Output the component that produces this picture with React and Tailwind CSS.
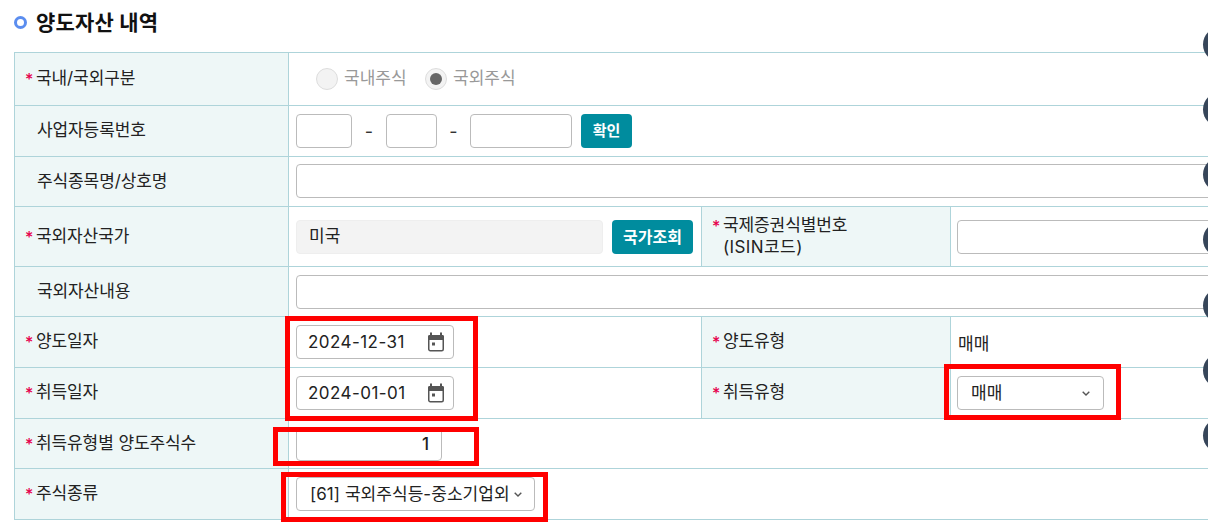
function Req() {
  return <span className="inline-block w-[11px] text-[#e6004c] text-[16px] font-medium leading-none relative top-[1px]">*</span>
}

function Label({ req, className = 'w-[274px]', children }) {
  return (
    <div className={`${className} shrink-0 h-full bg-[#eef7f7] border-r border-[#aed4da] flex items-center text-[17px] text-[#222] leading-[22px] tracking-[-0.1px] ${req ? 'pl-[10px]' : 'pl-[22px]'}`}>
      <div className="pb-[2px]">
        {req && <Req />}
        {children}
      </div>
    </div>
  )
}

function Row({ h, children }) {
  return <div className={`${h} flex items-center border-b border-[#aed4da]`}>{children}</div>
}

function Box({ className = 'bg-white border-[#bbbbbb]', children }) {
  return <div className={`h-[34px] border rounded-[4px] flex items-center text-[#222] ${className}`}>{children}</div>
}

function Teal({ className = '', children }) {
  return <div className={`h-[34px] rounded-[4px] bg-[#008c9e] text-white font-bold flex items-center justify-center ${className}`}>{children}</div>
}

function Radio({ checked }) {
  return (
    <div className="w-[22px] h-[22px] rounded-full border border-[#dddddd] bg-[#f3f3f3] flex items-center justify-center">
      {checked && <div className="w-[12px] h-[12px] rounded-full bg-[#666666]" />}
    </div>
  )
}

function CalendarIcon() {
  return (
    <svg width="18" height="20" viewBox="0 0 18 20" fill="none" className="shrink-0">
      <path d="M1 4.5a1.5 1.5 0 0 1 1.5-1.5h13A1.5 1.5 0 0 1 17 4.5V8H1z" fill="#555" />
      <path d="M4 0.5v3M14 0.5v3" stroke="#555" strokeWidth="2" />
      <rect x="1.75" y="3.75" width="14.5" height="15" rx="1.5" stroke="#555" strokeWidth="1.5" />
      <rect x="5" y="10.5" width="3" height="3" fill="#555" />
    </svg>
  )
}

function Chevron() {
  return (
    <svg width="8" height="5" viewBox="0 0 8 5" fill="none" stroke="#555" strokeWidth="1.4" className="shrink-0">
      <path d="M0.7 0.7L4 4l3.3-3.3" />
    </svg>
  )
}

function DateBox({ value }) {
  return (
    <Box className="w-[158px] bg-white border-[#bbbbbb] pl-[11px] pr-[8px] justify-between text-[17px] tracking-[0.45px]">
      <span className="pt-[2px]">{value}</span>
      <CalendarIcon />
    </Box>
  )
}

function RedBox({ className }) {
  return <div className={`absolute border-[5px] border-[#ff0000] ${className}`} />
}

export default function App() {
  const dots = ['top-[27px]', 'top-[92px]', 'top-[157px]', 'top-[222px]', 'top-[288px]', 'top-[353px]', 'top-[418px]']

  return (
    <div className="relative w-[1208px] h-[529px] overflow-hidden bg-white font-['Inter','Noto_Sans_CJK_KR',sans-serif]">
      {/* 제목 */}
      <div className="h-[52px] pl-[14px] flex items-center gap-[9px] pb-[7px]">
        <div className="w-[13px] h-[13px] rounded-full border-[3px] border-[#5b8def]" />
        <h2 className="text-[21px] font-bold text-[#111] tracking-[0.2px]">양도자산 내역</h2>
      </div>

      <div className="ml-[14px] w-[1300px] border-l border-t border-[#aed4da]">
        <Row h="h-[53px]">
          <Label req>국내/국외구분</Label>
          <div className="flex items-center pl-[27px] text-[17px] text-[#999999] pb-[1px]">
            <Radio />
            <span className="ml-[6px] w-[81px] pt-[1px]">국내주식</span>
            <Radio checked />
            <span className="ml-[6px] pt-[1px]">국외주식</span>
          </div>
        </Row>

        <Row h="h-[51px]">
          <Label>사업자등록번호</Label>
          <div className="flex items-center pl-[7px] text-[#333] text-[18px]">
            <Box className="w-[56px] bg-white border-[#bbbbbb]" />
            <span className="w-[34px] text-center">-</span>
            <Box className="w-[51px] bg-white border-[#bbbbbb]" />
            <span className="w-[33px] text-center">-</span>
            <Box className="w-[102px] bg-white border-[#bbbbbb]" />
            <Teal className="w-[51px] ml-[9px] text-[15px]">확인</Teal>
          </div>
        </Row>

        <Row h="h-[50px]">
          <Label>주식종목명/상호명</Label>
          <div className="flex-1 pl-[7px] pb-[1px]"><Box /></div>
        </Row>

        <Row h="h-[60px]">
          <Label req>국외자산국가</Label>
          <div className="w-[412px] shrink-0 flex items-center pl-[7px]">
            <Box className="w-[307px] bg-[#f3f3f3] border-[#eeeeee] pl-[12px] text-[17px]">미국</Box>
            <Teal className="w-[81px] ml-[9px] text-[16px]">국가조회</Teal>
          </div>
          <div className="w-[250px] shrink-0 h-full border-l border-[#aed4da]">
            <Label req className="w-full">
              국제증권식별번호<br /><span className="ml-[11px] tracking-[0.4px]">(ISIN코드)</span>
            </Label>
          </div>
          <div className="flex-1 pl-[6px]"><Box /></div>
        </Row>

        <Row h="h-[50px]">
          <Label>국외자산내용</Label>
          <div className="flex-1 pl-[7px]"><Box /></div>
        </Row>

        <Row h="h-[51px]">
          <Label req>양도일자</Label>
          <div className="w-[412px] shrink-0 pl-[7px]"><DateBox value="2024-12-31" /></div>
          <div className="w-[250px] shrink-0 h-full border-l border-[#aed4da]">
            <Label req className="w-full">양도유형</Label>
          </div>
          <div className="pl-[7px] pt-[6px] text-[17px] text-[#222]">매매</div>
        </Row>

        <Row h="h-[51px]">
          <Label req>취득일자</Label>
          <div className="w-[412px] shrink-0 pl-[7px]"><DateBox value="2024-01-01" /></div>
          <div className="w-[250px] shrink-0 h-full border-l border-[#aed4da]">
            <Label req className="w-full">취득유형</Label>
          </div>
          <div className="pl-[6px]">
            <Box className="w-[147px] bg-white border-[#bbbbbb] pl-[13px] pr-[13px] justify-between text-[17px]">
              <span className="pt-[1px]">매매</span>
              <Chevron />
            </Box>
          </div>
        </Row>

        <Row h="h-[50px]">
          <Label req>취득유형별 양도주식수</Label>
          <div className="pl-[7px]">
            <Box className="w-[146px] bg-white border-[#bbbbbb] justify-end pr-[12px] pt-[3px] text-[17px] font-medium">1</Box>
          </div>
        </Row>

        <Row h="h-[51px]">
          <Label req>주식종류</Label>
          <div className="pl-[7px]">
            <Box className="w-[239px] bg-white border-[#bbbbbb] pl-[13px] pr-[12px] justify-between text-[17px]">
              <span className="whitespace-nowrap pt-[1px] tracking-[0.05px]">[61] 국외주식등-중소기업외</span>
              <Chevron />
            </Box>
          </div>
        </Row>
      </div>

      {/* 강조 표시 */}
      <RedBox className="left-[285px] top-[316px] w-[193px] h-[105px]" />
      <RedBox className="left-[944px] top-[364px] w-[177px] h-[56px]" />
      <RedBox className="left-[273px] top-[427px] w-[206px] h-[39px]" />
      <RedBox className="left-[281px] top-[472px] w-[267px] h-[50px]" />

      {/* 우측 플로팅 버튼 */}
      {dots.map(t => (
        <div key={t} className={`absolute left-[1203px] ${t} w-[35px] h-[35px] rounded-full bg-[#37465a]`} />
      ))}
    </div>
  )
}
